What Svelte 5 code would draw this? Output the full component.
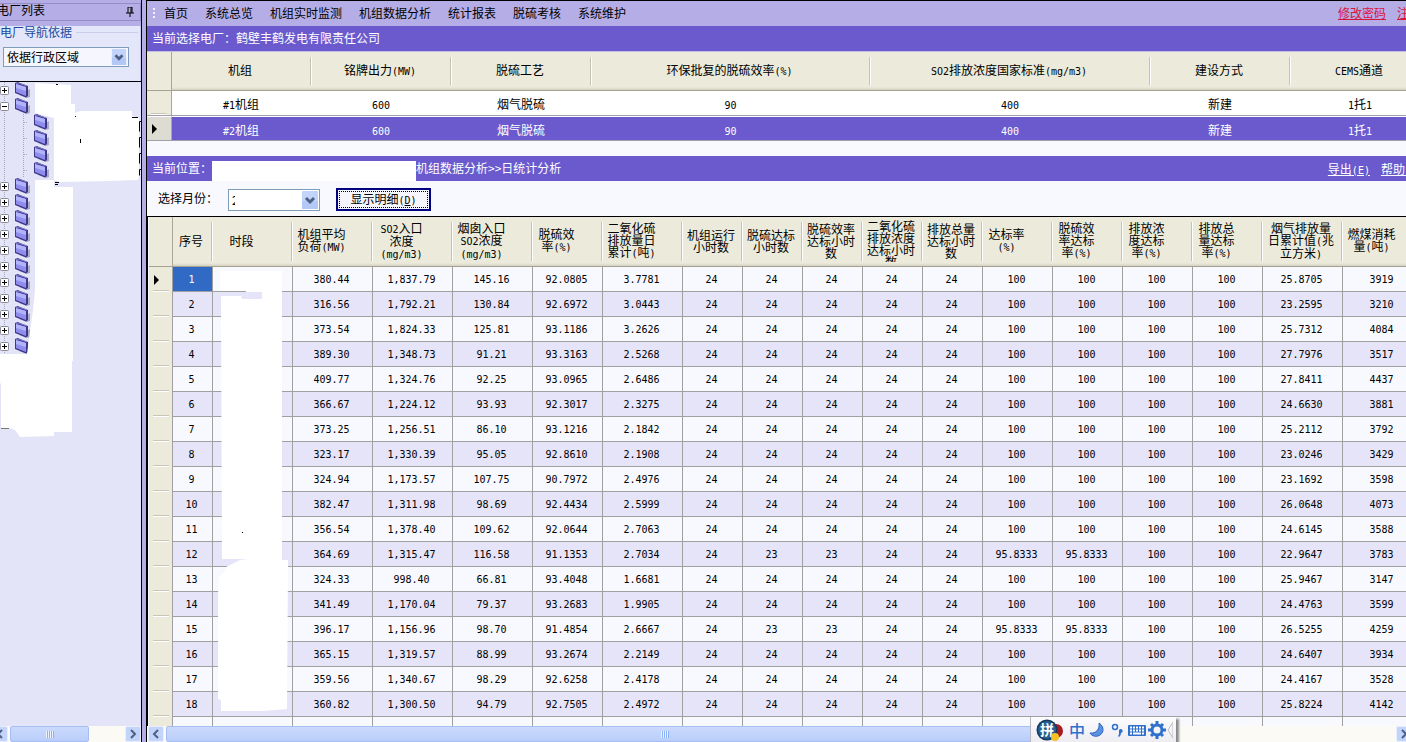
<script lang="ts">
	const menu = ['首页', '系统总览', '机组实时监测', '机组数据分析', '统计报表', '脱硫考核', '系统维护'];

	const unitColumns = [
		{ title: '机组', width: 140 },
		{ title: '铭牌出力(MW)', width: 140 },
		{ title: '脱硫工艺', width: 140 },
		{ title: '环保批复的脱硫效率(%)', width: 279 },
		{ title: 'SO2排放浓度国家标准(mg/m3)', width: 280 },
		{ title: '建设方式', width: 140 },
		{ title: 'CEMS通道', width: 140 }
	];

	const units = [
		['#1机组', '600', '烟气脱硫', '90', '400', '新建', '1托1'],
		['#2机组', '600', '烟气脱硫', '90', '400', '新建', '1托1']
	];

	let selectedUnit = $state(1);

	const columns = [
		{ lines: ['序号'], width: 40 },
		{ lines: ['时段'], width: 80, sortable: true },
		{ lines: ['机组平均', '负荷(MW)'], width: 80, sortable: true },
		{ lines: ['SO2入口', '浓度', '(mg/m3)'], width: 80, sortable: true },
		{ lines: ['烟囱入口', 'SO2浓度', '(mg/m3)'], width: 80, sortable: true },
		{ lines: ['脱硫效', '率(%)'], width: 70, sortable: true },
		{ lines: ['二氧化硫', '排放量日', '累计(吨)'], width: 80, sortable: true },
		{ lines: ['机组运行', '小时数'], width: 60 },
		{ lines: ['脱硫达标', '小时数'], width: 60 },
		{ lines: ['脱硫效率', '达标小时', '数'], width: 60 },
		{ lines: ['二氧化硫', '排放浓度', '达标小时', '数'], width: 60 },
		{ lines: ['排放总量', '达标小时', '数'], width: 60 },
		{ lines: ['达标率', '(%)'], width: 70, sortable: true },
		{ lines: ['脱硫效', '率达标', '率(%)'], width: 70, sortable: true },
		{ lines: ['排放浓', '度达标', '率(%)'], width: 70, sortable: true },
		{ lines: ['排放总', '量达标', '率(%)'], width: 70, sortable: true },
		{ lines: ['烟气排放量', '日累计值(兆', '立方米)'], width: 80 },
		{ lines: ['燃煤消耗', '量(吨)'], width: 80, sortable: true }
	];

	// load, SO2 in, SO2 out, efficiency, daily SO2, hours on target, rate, flue gas, coal
	const daily: [string, string, string, string, string, string, string, string, string][] = [
		['380.44', '1,837.79', '145.16', '92.0805', '3.7781', '24', '100', '25.8705', '3919'],
		['316.56', '1,792.21', '130.84', '92.6972', '3.0443', '24', '100', '23.2595', '3210'],
		['373.54', '1,824.33', '125.81', '93.1186', '3.2626', '24', '100', '25.7312', '4084'],
		['389.30', '1,348.73', '91.21', '93.3163', '2.5268', '24', '100', '27.7976', '3517'],
		['409.77', '1,324.76', '92.25', '93.0965', '2.6486', '24', '100', '27.8411', '4437'],
		['366.67', '1,224.12', '93.93', '92.3017', '2.3275', '24', '100', '24.6630', '3881'],
		['373.25', '1,256.51', '86.10', '93.1216', '2.1842', '24', '100', '25.2112', '3792'],
		['323.17', '1,330.39', '95.05', '92.8610', '2.1908', '24', '100', '23.0246', '3429'],
		['324.94', '1,173.57', '107.75', '90.7972', '2.4976', '24', '100', '23.1692', '3598'],
		['382.47', '1,311.98', '98.69', '92.4434', '2.5999', '24', '100', '26.0648', '4073'],
		['356.54', '1,378.40', '109.62', '92.0644', '2.7063', '24', '100', '24.6145', '3588'],
		['364.69', '1,315.47', '116.58', '91.1353', '2.7034', '23', '95.8333', '22.9647', '3783'],
		['324.33', '998.40', '66.81', '93.4048', '1.6681', '24', '100', '25.9467', '3147'],
		['341.49', '1,170.04', '79.37', '93.2683', '1.9905', '24', '100', '24.4763', '3599'],
		['396.17', '1,156.96', '98.70', '91.4854', '2.6667', '23', '95.8333', '26.5255', '4259'],
		['365.15', '1,319.57', '88.99', '93.2674', '2.2149', '24', '100', '24.6407', '3934'],
		['359.56', '1,340.67', '98.29', '92.6258', '2.4178', '24', '100', '24.4167', '3528'],
		['360.82', '1,300.50', '94.79', '92.7505', '2.4972', '24', '100', '25.8224', '4142']
	];

	const rows = daily.map(([load, inlet, outlet, eff, so2, hours, rate, gas, coal], i) => [
		String(i + 1), '', load, inlet, outlet, eff, so2,
		'24', hours, hours, '24', '24', rate, rate, '100', '100', gas, coal
	]);

	type Node = { level: number; open?: boolean };
	const tree: Node[] = [
		{ level: 0 },
		{ level: 0, open: true },
		...Array.from({ length: 4 }, () => ({ level: 1 })),
		...Array.from({ length: 11 }, () => ({ level: 0 }))
	];

	// separates half-width runs so they can use the narrow face
	function split(text: string) {
		return text.match(/[\x20-\x7e]+|[^\x20-\x7e]+/g) ?? [];
	}
</script>

{#snippet mixed(text: string)}
	{#each split(text) as part}{#if /^[\x20-\x7e]/.test(part)}<span class="half">{part}</span>{:else}{part}{/if}{/each}
{/snippet}

{#snippet chevron()}
	<svg class="chevron" viewBox="0 0 16 18" aria-hidden="true">
		<rect width="16" height="18" rx="1" fill="#c3d4fb" />
		<rect y="10" width="16" height="8" fill="#b4c8f6" />
		<path d="M4 7l4 4 4-4" fill="none" stroke="#4d6185" stroke-width="3" />
	</svg>
{/snippet}

{#snippet arrowButton(dir: 'left' | 'right')}
	<button class="arrow" aria-label={dir === 'left' ? '向左滚动' : '向右滚动'}>
		<svg width="8" height="10" viewBox="0 0 8 10">
			<path d={dir === 'left' ? 'M6 1L2 5l4 4' : 'M2 1l4 4-4 4'} fill="none" stroke="#4d6185" stroke-width="2" />
		</svg>
	</button>
{/snippet}

{#snippet pointer()}
	<svg class="pointer" width="5" height="10" viewBox="0 0 5 10"><path d="M0 0l5 5-5 5z" /></svg>
{/snippet}

<div class="app">
	<aside>
		<div class="title">
			<span>电厂列表</span>
			<svg width="8" height="10" viewBox="0 0 8 10">
				<path d="M2 0v6M2 0h4M5 0v6M6 0v6M0 6h8M4 6v4" fill="none" stroke="#000" />
			</svg>
		</div>
		<fieldset>
			<legend>电厂导航依据</legend>
			<div class="combo nav">
				<select aria-label="电厂导航依据">
					<option>依据行政区域</option>
				</select>
				{@render chevron()}
			</div>
		</fieldset>
		<div class="tree">
			<ul>
				{#each tree as node}
					<li class:child={node.level === 1}>
						{#if node.level === 0}
							<svg class="twist" width="9" height="16" viewBox="0 0 9 16">
								<path d="M4.500 0v16" stroke="#a9a7b8" stroke-dasharray="1 1" />
								<rect x=".5" y="4.500" width="8" height="8" rx="1" fill="#fff" stroke="#8a8a96" />
								<path d={node.open ? 'M2 8.500h5' : 'M2 8.500h5M4.500 6v5'} stroke="#000" />
							</svg>
						{:else}
							<svg class="twist" width="28" height="16" viewBox="0 0 28 16">
								<path d="M4.500 0v16M23.500 0v16M24 8.500h4" stroke="#a9a7b8" stroke-dasharray="1 1" />
							</svg>
						{/if}
						<svg width="16" height="16" viewBox="0 0 16 16">
							<path d="M4 13l8 3 3-1V7z" fill="#8885a5" opacity=".6" />
							<path d="M0 1l3-1 2 1 8 3v10l-2 1.500L0 11z" fill="#3c3787" />
							<path d="M1 2l10 3v9L1 10z" fill="#8f8eef" />
							<path d="M1 2l10 3v4L1 6z" fill="#b3b3fb" />
							<path d="M1 1.500L3 1l9 3" fill="none" stroke="#7d7acb" />
						</svg>
					</li>
				{/each}
			</ul>
			<svg class="mask" width="142" height="360" viewBox="0 82 142 360" aria-hidden="true">
				<path fill="#fff" d="M35 83L71 85V104H75V113L80 111H132V116L139 118V177L138 180L107 181L60 182L54 180V118L35 113Z" />
				<path fill="#fff" d="M35 180H54V187H73V361H72V432H54V436L20 437L15 430L10 428H1V385L0 382V354H27L33 310L35 290Z" />
				<path fill="none" stroke="#000" d="M56 84.500h2M75 116.500h1M132 117.500h6M80.500 139v4M141 121.500h-1.500v10M141 137.500h-1.500v10M141 153.500h-1.500v10M141 169.500h-1.500v6M55 182.500h4M55 184.500h3" />
				<path stroke="#777" d="M1 428.500h8" />
			</svg>
		</div>
		<div class="scrollbar side">
			{@render arrowButton('left')}
			<div class="thumb"><i></i></div>
			<div class="track"></div>
			{@render arrowButton('right')}
		</div>
	</aside>
	<div class="splitter"></div>

	<main>
		<div class="sheet">
			<nav>
				<i class="grip"></i>
				{#each menu as item}
					<button>{item}</button>
				{/each}
				<div class="links">
					<a href="#password">修改密码</a>
					<a href="#logout">注销</a>
				</div>
			</nav>
			<div class="band">当前选择电厂：鹤壁丰鹤发电有限责任公司</div>
			<table class="units">
				<colgroup>
					<col style="width: 25px" />
					{#each unitColumns as col}<col style="width: {col.width}px" />{/each}
				</colgroup>
				<thead>
					<tr>
						<th class="handle"></th>
						{#each unitColumns as col}<th>{@render mixed(col.title)}</th>{/each}
					</tr>
				</thead>
				<tbody>
					{#each units as unit, i}
						<tr class:selected={selectedUnit === i} onclick={() => (selectedUnit = i)}>
							<td class="handle">{#if selectedUnit === i}{@render pointer()}{/if}</td>
							{#each unit as cell}<td>{@render mixed(cell)}</td>{/each}
						</tr>
					{/each}
				</tbody>
			</table>

			<div class="band place">
				<span>当前位置：</span>
				<span class="blank"></span>
				<span>机组数据分析&gt;&gt;日统计分析</span>
				<div class="links">
					<a href="#export">导出{@render mixed('(E)')}</a>
					<a href="#help">帮助{@render mixed('(H)')}</a>
				</div>
			</div>

			<form class="filter" onsubmit={(e) => e.preventDefault()}>
				<label for="month">选择月份：</label>
				<div class="combo month">
					<select id="month">
						<option>2</option>
					</select>
					<span class="cover"></span>
					{@render chevron()}
				</div>
				<button class="detail"><span>显示明细<span class="half">(<u>D</u>)</span></span></button>
			</form>

			<div class="grid">
				<table class="stats">
					<colgroup>
						<col style="width: 24px" />
						{#each columns as col}<col style="width: {col.width}px" />{/each}
					</colgroup>
					<thead>
						<tr>
							<th class="handle"></th>
							{#each columns as col}
								<th class:sortable={col.sortable}>
									<div>{#each col.lines as line, i}{#if i}<br />{/if}{@render mixed(line)}{/each}</div>
								</th>
							{/each}
						</tr>
					</thead>
					<tbody>
						{#each rows as row, r}
							<tr>
								<td class="handle">{#if r === 0}{@render pointer()}{/if}</td>
								{#each row as cell, c}<td class="half" class:current={r === 0 && c === 0}>{cell}</td>{/each}
							</tr>
						{/each}
						<tr>
							<td class="handle"></td>
							{#each columns as _}<td></td>{/each}
						</tr>
					</tbody>
				</table>
				<svg class="mask period" width="80" height="450" viewBox="213 267 80 450" aria-hidden="true">
					<path fill="#fff" d="M220 271H282V560H288L287 709L262 711H221V700L218 699V595L219 577L225 571L226 567L240 560L248 559H222L221 296H241L242 299H262V292H246V291H220Z" />
					<path d="M242 532h1v1h-1z" />
				</svg>
			</div>
			<div class="scrollbar wide">
				{@render arrowButton('left')}
				<div class="thumb"><i></i></div>
				<div class="track"></div>
				{@render arrowButton('right')}
			</div>
		</div>
	</main>

	<div class="ime">
		<svg class="ball" width="28" height="22" viewBox="0 0 28 22">
			<circle cx="20" cy="12" r="7" fill="#a51c22" />
			<circle cx="11" cy="11" r="10.500" fill="#15395f" />
			<circle cx="11" cy="11" r="9" fill="#27608f" />
			<text x="4" y="16" font-size="14" font-weight="700" fill="#fff">拼</text>
			<circle cx="19" cy="18" r="4" fill="#f6bf26" />
		</svg>
		<b>中</b>
		<svg width="20" height="20" viewBox="0 0 20 20">
			<path d="M12 3c6 4 5 11-1 13-4 1-7-1-8-3 6 1 10-4 9-10z" fill="#5b93e0" stroke="#2b62bd" />
		</svg>
		<svg width="20" height="20" viewBox="0 0 20 20">
			<circle cx="8" cy="7" r="2.500" fill="none" stroke="#2f70cc" stroke-width="1.500" />
			<path d="M12 10a2 2 0 1 1 2 3c0 2-1 3-2 4l-1-1c1-1 1-2 1-3z" fill="#2f70cc" />
		</svg>
		<svg width="20" height="20" viewBox="0 0 20 20">
			<rect x="1" y="5" width="18" height="11" rx="1" fill="#2f70cc" />
			<path d="M3 7.500h14M3 10.500h14" stroke="#fff" stroke-width="2" stroke-dasharray="2 1" />
			<path d="M3 13.500h2m1 0h8m1 0h2" stroke="#fff" stroke-width="2" />
		</svg>
		<svg width="20" height="20" viewBox="0 0 20 20">
			<circle cx="10" cy="10" r="5" fill="none" stroke="#2f70cc" stroke-width="3" />
			<path d="M10 1v4M10 15v4M1 10h4M15 10h4M4 4l2 2M14 14l2 2M16 4l-2 2M4 16l2-2" stroke="#2f70cc" stroke-width="3" />
		</svg>
		<svg width="6" height="18" viewBox="0 0 6 18"><path d="M6 1v16L1 9z" fill="#f4f4f6" stroke="#bdbdc2" /></svg>
	</div>
</div>

<style>
	:global(body) {
		margin: 0;
		overflow: hidden;
	}

	.app {
		position: relative;
		display: flex;
		height: 100vh;
		overflow: hidden;
		background: #b5aee6;
		color: #000;
		font: 12px/16px 'Noto Sans CJK SC', sans-serif;
	}

	button,
	select {
		font: inherit;
		color: inherit;
	}

	.half {
		font-family: 'DejaVu Sans Mono', monospace;
		font-size: 10px;
		line-height: 10px;
	}

	aside {
		display: flex;
		flex-direction: column;
		flex: 0 0 141px;
		min-width: 0;
		overflow: hidden;
		border-right: 1px solid #000;
	}

	.title {
		display: flex;
		align-items: center;
		justify-content: space-between;
		height: 16px;
		margin: 3px 0 5px;
		padding-right: 6px;
		border: 1px solid #958dc6;
		border-left: 0;
	}

	.title span {
		margin-left: -3px;
		padding-bottom: 4px;
	}

	fieldset {
		position: relative;
		height: 55px;
		min-width: 0;
		box-sizing: border-box;
		margin: 0;
		padding: 6px 0 0 3px;
		border: 0;
		background: #e4e6f9;
		box-shadow: inset -1px 0 #c9cdea;
	}

	legend {
		float: left;
		width: 100%;
		margin: -6px 0 6px -3px;
		padding: 0;
		color: #1a4b9f;
		line-height: 12px;
		white-space: nowrap;
		background: linear-gradient(#cacdea, #cacdea) 76px 6px / 100% 1px no-repeat;
	}

	.combo {
		position: relative;
		display: grid;
		box-sizing: border-box;
		border: 1px solid #7f9db9;
		background: #fff;
	}

	.combo > * {
		grid-area: 1 / 1;
	}

	.combo select {
		appearance: none;
		width: 100%;
		min-width: 0;
		padding: 0 18px 0 3px;
		border: 0;
		background: none;
		line-height: 16px;
	}

	.chevron {
		width: 16px;
		height: calc(100% - 2px);
		margin: 1px;
		justify-self: end;
		pointer-events: none;
	}

	.nav {
		clear: both;
		width: 126px;
		height: 20px;
		margin-top: 15px;
		background: #f6f7fe;
	}

	.tree {
		position: relative;
		flex: 1;
		min-height: 0;
		overflow: hidden;
		border-top: 1px solid #000;
		background: #e4e4f8;
	}

	.tree ul {
		margin: 0;
		padding: 0;
		list-style: none;
	}

	.tree li {
		display: flex;
		gap: 6px;
		height: 16px;
	}

	.tree li svg {
		flex: none;
	}

	.mask {
		position: absolute;
		top: 0;
		left: 0;
	}

	.splitter {
		flex: 0 0 4px;
		border-right: 1px solid #000;
	}

	main {
		flex: 1;
		min-width: 0;
		overflow: hidden;
		border-top: 1px solid #000;
		background: #f8f9ff;
	}

	/* runs past the window edge, as the maximised client area does */
	.sheet {
		display: flex;
		flex-direction: column;
		width: calc(100% + 18px);
		height: 100%;
	}

	nav {
		display: flex;
		box-sizing: border-box;
		flex: 0 0 25px;
		align-items: center;
		gap: 17px;
		padding-bottom: 2px;
		background: #b5aee6;
	}

	nav button {
		padding: 0;
		border: 0;
		background: none;
		white-space: nowrap;
	}

	.grip {
		width: 2px;
		height: 10px;
		margin: 0 -8px 0 6px;
		background: repeating-linear-gradient(#f4f2ff 0 2px, transparent 2px 4px);
	}

	.links {
		display: flex;
		gap: 11px;
		margin-left: auto;
		padding-right: 3px;
		white-space: nowrap;
	}

	nav .links a {
		color: #d8143c;
	}

	.band {
		display: flex;
		box-sizing: border-box;
		flex: 0 0 25px;
		align-items: center;
		padding: 0 0 2px 5px;
		background: #6a5acd;
		color: #fff;
	}

	.band a {
		color: #fff;
	}

	.place {
		padding-bottom: 0;
	}

	.place > span:not(.blank) {
		padding-bottom: 2px;
	}

	.place .links {
		padding-right: 1px;
	}

	.blank {
		align-self: flex-end;
		width: 204px;
		height: 20px;
		background: #fff;
	}

	table {
		width: max-content;
		table-layout: fixed;
		border-collapse: separate;
		border-spacing: 0;
		text-align: center;
	}

	th,
	td {
		box-sizing: border-box;
		padding: 2px 2px 0 0;
		overflow: hidden;
		font-weight: 400;
		white-space: nowrap;
	}

	th {
		padding: 0 4px 2px 0;
		background:
			linear-gradient(90deg, #c5c2b2 50%, #fff 50%) right center / 2px calc(100% - 10px) no-repeat,
			linear-gradient(transparent calc(100% - 3px), #d6d2c2) #ebeadb;
		border-bottom: 1px solid #a5a293;
	}

	th.handle {
		border-right: 1px solid #aca899;
		background: #ebeadb;
	}

	td.handle {
		padding: 0;
		border-right: 1px solid #aca899;
		border-bottom: 0;
		background:
			linear-gradient(#c9c6b4 50%, #fff 50%) center bottom / 16px 2px no-repeat,
			#ebeadb;
	}

	.pointer {
		display: block;
		margin-left: 5px;
	}

	.units {
		margin-bottom: 15px;
		border-top: 1px solid #c4bfe6;
	}

	.units th {
		height: 39px;
	}

	.units td {
		height: 25px;
		border-bottom: 1px solid #a0a0ac;
		background-color: #fff;
	}

	.units td.handle {
		background-color: #ebeadb;
	}

	.units .selected td {
		border-top: 1px solid #fff;
		background-color: #6a5acd;
		color: #fff;
	}

	.units .selected td.handle {
		background: #dcdcd2;
	}

	.filter {
		display: flex;
		flex: 0 0 35px;
		align-items: center;
		padding-left: 11px;
	}

	.filter label {
		padding-bottom: 2px;
	}

	.month {
		width: 92px;
		height: 22px;
		margin: 2px 16px 0 10px;
	}

	.cover {
		margin: 1px 18px 0 6px;
		background: #fff;
		pointer-events: none;
	}

	.detail {
		width: 95px;
		height: 23px;
		margin-top: 1px;
		padding: 1px;
		border: 2px solid #000080;
		background: #f6f7fe;
	}

	.detail > span {
		display: block;
		height: 15px;
		border: 1px dotted #000;
		line-height: 13px;
	}

	.grid {
		position: relative;
		flex: 1;
		min-height: 0;
		overflow: hidden;
		border-top: 1px solid #000;
		border-left: 1px solid #000;
		padding-left: 1px;
	}

	.stats th {
		height: 50px;
		line-height: 12px;
	}

	.stats th div {
		max-height: 42px;
		overflow: hidden;
	}

	.stats th.sortable {
		padding-right: 23px;
	}

	.stats td {
		height: 25px;
		border-right: 1px solid #a0a0a0;
		border-bottom: 1px solid #a0a0a0;
	}

	.stats td.handle {
		border-bottom: 0;
	}

	.stats tr:nth-child(even) td:not(.handle) {
		background: #e6e4f8;
	}

	.stats td.current {
		background: #316ac5;
		color: #fff;
	}

	.period {
		top: 50px;
		left: 65px;
	}

	.scrollbar {
		display: flex;
		flex: 0 0 16px;
		gap: 2px;
		background: #fbfaf4;
	}

	.side {
		margin-left: -8px;
	}

	.wide {
		margin: 0 12px 0 1px;
	}

	.arrow {
		display: grid;
		place-items: center;
		flex: 0 0 16px;
		padding: 0;
		border: 1px solid #e8eefe;
		border-radius: 2px;
		background: #c3d4fb;
	}

	.thumb {
		display: grid;
		place-items: center;
		box-sizing: border-box;
		border: 1px solid #a5bdf0;
		border-radius: 2px;
		background: linear-gradient(#cbdafd, #b9cefa);
	}

	.thumb i {
		width: 8px;
		height: 7px;
		background: repeating-linear-gradient(90deg, #eef4fe 0 1px, #8cb0f8 1px 2px);
	}

	.side .thumb {
		flex: 0 0 79px;
	}

	.wide .thumb {
		flex: 0 0 79%;
	}

	.track {
		flex: 1;
	}

	.ime {
		position: absolute;
		right: 230px;
		bottom: 0;
		display: flex;
		align-items: center;
		box-sizing: border-box;
		height: 25px;
		padding: 0 3px 0 5px;
		border-left: 1px solid #b8b8c0;
		background: linear-gradient(#fdfdff, #ececf2);
		box-shadow: 3px 2px 2px #8a8a8a;
	}

	.ball {
		margin-right: 3px;
	}

	.ime b {
		width: 20px;
		color: #2f70cc;
		font-size: 16px;
		font-weight: 500;
		text-align: center;
	}
</style>
